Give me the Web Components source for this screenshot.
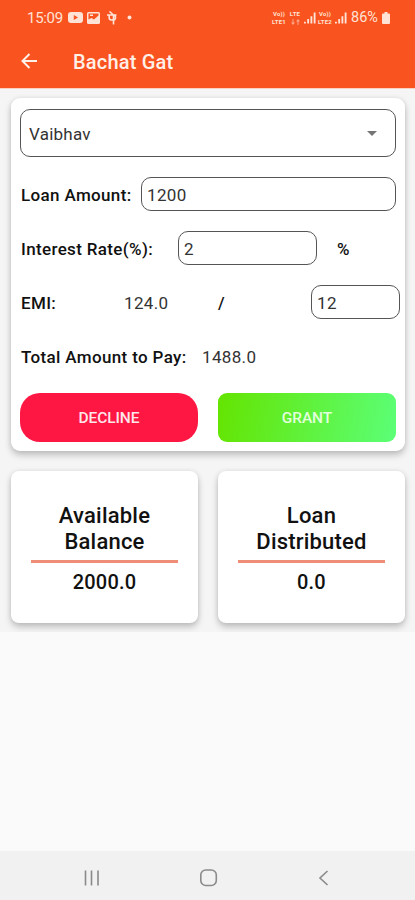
<!DOCTYPE html>
<html lang="en">
<head>
  <meta charset="UTF-8">
  <meta name="viewport" content="width=device-width, initial-scale=1.0">
  <title>Bachat Gat</title>
  <style>
    body {
      margin: 0;
      font-family: Roboto, "Liberation Sans", sans-serif;
      --primary: #f9531f;
      --decline: #ff1744;
    }
  </style>
</head>
<body>
  <bachat-app></bachat-app>

  <script>
    class StatusBar extends HTMLElement {
      constructor() {
        super();
        this.shadowDOM = this.attachShadow({ mode: "open" });
      }
      connectedCallback() {
        this.render();
      }
      render() {
        this.shadowDOM.innerHTML = `
          <style>
            * {
              margin: 0;
              padding: 0;
              box-sizing: border-box;
            }
            :host {
              display: flex;
              align-items: center;
              justify-content: space-between;
              height: 35px;
              padding: 0 25px 0 27px;
              color: #ffe3d6;
              font-size: 15px;
            }
            .side {
              display: flex;
              align-items: center;
            }
            .time {
              width: 41px;
              letter-spacing: -0.3px;
            }
            .net {
              display: grid;
              grid-template-rows: 8px 8px;
              width: 16px;
              font-size: 6px;
              line-height: 8px;
              font-weight: 700;
              letter-spacing: 0.2px;
              text-align: center;
              white-space: nowrap;
            }
            .lte {
              width: 14px;
              margin-left: 1px;
            }
            svg {
              display: block;
              fill: currentColor;
            }
            .arrows {
              margin: 1px auto 0;
              opacity: 0.6;
            }
            .battery-text {
              font-size: 14.5px;
              margin-left: 4px;
              width: 31px;
            }
          </style>
          <div class="side">
            <span class="time">15:09</span>
            <svg width="15" height="11" viewBox="0 0 15 11"><path fill-rule="evenodd" d="M3 0h9a3 3 0 0 1 3 3v5a3 3 0 0 1-3 3H3a3 3 0 0 1-3-3V3a3 3 0 0 1 3-3zM5.800 3v5l4.200-2.500z"/></svg>
            <svg style="margin-left:4px" width="13" height="12" viewBox="0 0 13 12"><path fill-rule="evenodd" d="M1.500 0h10A1.500 1.500 0 0 1 13 1.500v9a1.500 1.500 0 0 1-1.500 1.500h-10A1.500 1.500 0 0 1 0 10.500v-9A1.500 1.500 0 0 1 1.500 0zM1.500 1.500v6l3-1.500 2.500 1.500 4.500-4v-2zM3 2.500h3v1.500H3z"/></svg>
            <svg style="margin-left:7px" width="10" height="14" viewBox="0 0 10 14"><path fill="none" stroke="currentColor" stroke-width="1.600" d="M0 4h9.500M2.500 .5l4 3.500v9.500M2.200 4v3c0 2.500 4.300 2.300 4.300 1M6.500 9.500c2.500-1 2.500-3.500 1-5.500"/></svg>
            <svg style="margin-left:10px" width="5" height="6" viewBox="0 0 5 6"><circle cx="2.500" cy="2.500" r="2"/></svg>
          </div>
          <div class="side">
            <div class="net"><span>Vo))</span><span>LTE1</span></div>
            <div class="net lte">
              <span>LTE</span>
              <svg class="arrows" width="9" height="6" viewBox="0 0 9 6"><path d="M1.500 0h1v3.500H4L2 6 0 3.500h1.500zM6.500 6h1V2.500H9L7 0 5 2.500h1.500z"/></svg>
            </div>
            <svg style="margin-left:2px" width="12" height="12" viewBox="0 0 13 12"><path d="M0 10h2v2H0zM3.500 7h2v5h-2zM7 4h2v8H7zM10.500 0h2v12h-2z"/></svg>
            <div class="net" style="margin-left:1px"><span>Vo))</span><span>LTE2</span></div>
            <svg style="margin-left:2px" width="12" height="12" viewBox="0 0 13 12"><path d="M0 10h2v2H0zM3.500 7h2v5h-2zM7 4h2v8H7zM10.500 0h2v12h-2z"/></svg>
            <span class="battery-text">86%</span>
            <svg width="8" height="12" viewBox="0 0 8 12"><path d="M2.500 0h3v1.500H7a1 1 0 0 1 1 1V11a1 1 0 0 1-1 1H1a1 1 0 0 1-1-1V2.500a1 1 0 0 1 1-1h1.500z"/></svg>
          </div>
        `;
      }
    }

    class AppHeader extends HTMLElement {
      constructor() {
        super();
        this.shadowDOM = this.attachShadow({ mode: "open" });
      }
      connectedCallback() {
        this.render();
      }
      render() {
        this.shadowDOM.innerHTML = `
          <style>
            :host {
              display: block;
              height: 88px;
              background: var(--primary);
              border-bottom: 1px solid #fbcfc1;
            }
            .toolbar {
              display: flex;
              align-items: center;
              height: 53px;
              padding-left: 21px;
              color: #fff0e8;
            }
            svg {
              margin-bottom: 1px;
            }
            h1 {
              margin: 0 0 0 36px;
              font-size: 20px;
              font-weight: 500;
              letter-spacing: 0.2px;
            }
          </style>
          <status-bar></status-bar>
          <div class="toolbar">
            <svg width="16" height="16" viewBox="0 0 16 16" fill="none" stroke="currentColor" stroke-width="2"><path d="M16 8H1.500M8.500 1l-7 7 7 7"/></svg>
            <h1><slot></slot></h1>
          </div>
        `;
      }
    }

    class OutlineField extends HTMLElement {
      constructor() {
        super();
        this.shadowDOM = this.attachShadow({ mode: "open" });
      }
      connectedCallback() {
        this.render();
      }
      render() {
        this.shadowDOM.innerHTML = `
          <style>
            :host {
              display: flex;
              align-items: center;
              justify-content: space-between;
              box-sizing: border-box;
              height: 34px;
              padding: 1px 5px 0;
              border: 1px solid #555;
              border-radius: 10px;
              background: #fff;
              color: #333;
              font-size: 17px;
              letter-spacing: 0.35px;
            }
            :host([dropdown]) {
              height: 48px;
              padding: 1px 18px 0 8px;
              letter-spacing: 0.25px;
            }
            svg {
              display: block;
            }
          </style>
          <span><slot></slot></span>
          ${this.hasAttribute("dropdown") ? `<svg width="10" height="5" viewBox="0 0 10 5"><path fill="#757575" d="M0 0h10L5 5z"/></svg>` : ""}
        `;
      }
    }

    class ActionButton extends HTMLElement {
      constructor() {
        super();
        this.shadowDOM = this.attachShadow({ mode: "open" });
      }
      connectedCallback() {
        this.render();
      }
      render() {
        this.shadowDOM.innerHTML = `
          <style>
            :host {
              display: block;
              height: 49px;
            }
            button {
              display: block;
              width: 100%;
              height: 100%;
              padding: 0;
              border: none;
              border-radius: 20px;
              background: var(--decline);
              color: #ffe6ea;
              font: 500 15.5px Roboto, "Liberation Sans", sans-serif;
              letter-spacing: -0.1px;
            }
            :host([kind="grant"]) button {
              border-radius: 9px;
              background: linear-gradient(100deg, #64e400, #5bff77);
              color: #e2ffdc;
            }
          </style>
          <button type="button"><slot></slot></button>
        `;
      }
    }

    class LoanForm extends HTMLElement {
      constructor() {
        super();
        this.shadowDOM = this.attachShadow({ mode: "open" });
      }
      connectedCallback() {
        this.render();
      }
      render() {
        this.shadowDOM.innerHTML = `
          <style>
            :host {
              display: block;
              box-sizing: border-box;
              height: 353px;
              padding: 11px 9px 0;
              border-radius: 9px;
              background: #fff;
              box-shadow: 0 4px 7px rgba(0, 0, 0, 0.22), 0 0 5px rgba(0, 0, 0, 0.08);
              font-size: 17px;
              letter-spacing: 0.35px;
              color: #333;
            }
            .rows {
              display: grid;
              grid-template-columns: minmax(0, 1fr);
              gap: 20px;
              margin-top: 20px;
            }
            .row {
              display: flex;
              align-items: center;
              height: 34px;
              white-space: nowrap;
            }
            .row > span {
              flex: none;
              box-sizing: border-box;
              padding-top: 1px;
            }
            .row > .label {
              padding-left: 1px;
              font-weight: 500;
              color: #111;
            }
            .buttons {
              display: grid;
              grid-template-columns: 1fr 1fr;
              gap: 20px;
              margin-top: 20px;
            }
          </style>
          <outline-field dropdown>Vaibhav</outline-field>
          <div class="rows">
            <div class="row">
              <span class="label" style="width:121px">Loan Amount:</span>
              <outline-field style="flex:1">1200</outline-field>
            </div>
            <div class="row">
              <span class="label" style="width:158px">Interest Rate(%):</span>
              <outline-field style="width:139px">2</outline-field>
              <span class="label" style="margin-left:19px">%</span>
            </div>
            <div class="row">
              <span class="label" style="width:104px">EMI:</span>
              <span style="width:93px">124.0</span>
              <span class="label" style="width:94px">/</span>
              <outline-field style="flex:none;width:89px">12</outline-field>
            </div>
            <div class="row">
              <span class="label" style="width:182px">Total Amount to Pay:</span>
              <span>1488.0</span>
            </div>
          </div>
          <div class="buttons">
            <action-button>DECLINE</action-button>
            <action-button kind="grant">GRANT</action-button>
          </div>
        `;
      }
    }

    class SummaryCard extends HTMLElement {
      constructor() {
        super();
        this.shadowDOM = this.attachShadow({ mode: "open" });
      }
      connectedCallback() {
        this.render();
      }
      render() {
        this.shadowDOM.innerHTML = `
          <style>
            :host {
              display: block;
              box-sizing: border-box;
              height: 152px;
              padding: 32px 20px 0;
              border-radius: 8px;
              background: #fff;
              box-shadow: 0 4px 7px rgba(0, 0, 0, 0.22), 0 0 5px rgba(0, 0, 0, 0.08);
              text-align: center;
              color: #111;
              letter-spacing: 0.2px;
            }
            h2 {
              margin: 0;
              font-size: 22px;
              line-height: 26px;
              font-weight: 500;
            }
            hr {
              height: 3px;
              margin: 5px 0 7px;
              border: none;
              background: #ee8e76;
            }
            p {
              margin: 0;
              font-size: 20px;
              line-height: 24px;
              font-weight: 500;
            }
          </style>
          <h2><slot name="title"></slot></h2>
          <hr>
          <p><slot></slot></p>
        `;
      }
    }

    class NavBar extends HTMLElement {
      constructor() {
        super();
        this.shadowDOM = this.attachShadow({ mode: "open" });
      }
      connectedCallback() {
        this.render();
      }
      render() {
        this.shadowDOM.innerHTML = `
          <style>
            :host {
              display: flex;
              align-items: center;
              justify-content: space-between;
              box-sizing: border-box;
              height: 49px;
              padding: 4px 86px 0 82px;
              background: #f1f1f1;
            }
            svg {
              fill: none;
              stroke: #8a8a8a;
              stroke-width: 1.6;
            }
          </style>
          <svg width="17" height="18" viewBox="0 0 17 18"><path d="M3.500 1.500v15M9.500 1.500v15M16 1.500v15"/></svg>
          <svg width="18" height="18" viewBox="0 0 18 18"><rect x="0.800" y="1" width="15.500" height="15.500" rx="5"/></svg>
          <svg width="11" height="18" viewBox="0 0 11 18"><path d="M9.500 2L2 9l7.500 7"/></svg>
        `;
      }
    }

    class BachatApp extends HTMLElement {
      constructor() {
        super();
        this.shadowDOM = this.attachShadow({ mode: "open" });
      }
      connectedCallback() {
        this.render();
      }
      render() {
        this.shadowDOM.innerHTML = `
          <style>
            :host {
              display: flex;
              flex-direction: column;
              height: 900px;
              overflow: hidden;
              background: #fafafa;
            }
            main {
              flex: 1;
            }
            .content {
              box-sizing: border-box;
              height: 543px;
              padding: 9px 10px 0 11px;
              overflow: hidden;
              background: #f5f5f5;
            }
            .cards {
              display: grid;
              grid-template-columns: 1fr 1fr;
              gap: 20px;
              margin-top: 20px;
            }
          </style>
          <app-header>Bachat Gat</app-header>
          <main>
            <div class="content">
              <loan-form></loan-form>
              <div class="cards">
                <summary-card><span slot="title">Available<br>Balance</span>2000.0</summary-card>
                <summary-card><span slot="title">Loan<br>Distributed</span>0.0</summary-card>
              </div>
            </div>
          </main>
          <nav-bar></nav-bar>
        `;
      }
    }

    customElements.define("status-bar", StatusBar);
    customElements.define("app-header", AppHeader);
    customElements.define("outline-field", OutlineField);
    customElements.define("action-button", ActionButton);
    customElements.define("loan-form", LoanForm);
    customElements.define("summary-card", SummaryCard);
    customElements.define("nav-bar", NavBar);
    customElements.define("bachat-app", BachatApp);
  </script>
</body>
</html>
